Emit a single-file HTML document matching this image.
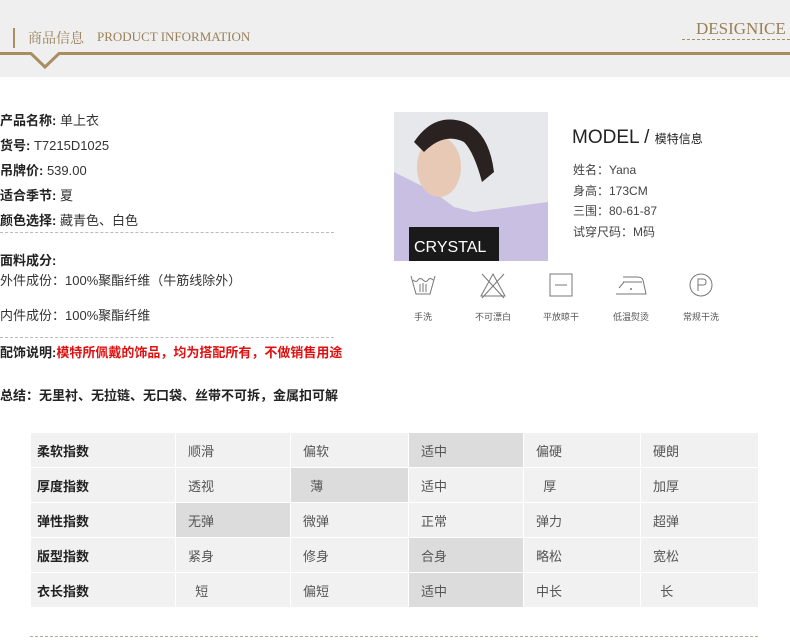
<!DOCTYPE html>
<html><head><meta charset="utf-8"><style>
*{margin:0;padding:0;box-sizing:border-box}
body{width:790px;height:642px;background:#fff;position:relative;overflow:hidden;font-family:"Liberation Sans","Noto Sans CJK SC",sans-serif;color:#333}
.a{position:absolute;white-space:nowrap}
.t{font-size:13px}
b{font-weight:bold;color:#222}
.dash{position:absolute;border-top:1px dashed #bbb;height:0}
table{position:absolute;left:30px;top:432px;border-collapse:collapse;font-size:13px}
td{height:35px;background:#f1f1f1;border:1px solid #fff;padding-left:12px;color:#555}
td.l{font-weight:bold;color:#222;padding-left:6px;width:145px}
td.s{background:#dcdcdc}
.ic{position:absolute;top:270px;width:50px;text-align:center;font-size:9px;color:#555}
</style></head><body>
<div class="a" style="left:0;top:0;width:790px;height:77px;background:#efefef"></div>
<div class="a" style="left:13px;top:28px;width:2px;height:20px;background:#a88e62"></div>
<div class="a" style="left:28px;top:28px;font-size:14px;color:#9a8058;font-family:'Liberation Serif','Noto Serif CJK SC',serif">商品信息<span style="font-size:13px;position:absolute;left:69px;top:1px">PRODUCT INFORMATION</span></div>
<div class="a" style="left:696px;top:19px;font-size:17px;color:#9a8058;font-family:'Liberation Serif',serif">DESIGNICE</div>
<div class="a" style="left:682px;top:39px;width:108px;border-top:1px dashed #a88e62"></div>
<svg class="a" style="left:0;top:50px" width="790" height="20"><path d="M0 3.5H31L45 17L59 3.5H790" stroke="#a88e62" stroke-width="3" fill="none"/></svg>

<div class="a t" style="left:0;top:110px"><b>产品名称:</b> 单上衣</div>
<div class="a t" style="left:0;top:135px"><b>货号:</b> T7215D1025</div>
<div class="a t" style="left:0;top:160px"><b>吊牌价:</b> 539.00</div>
<div class="a t" style="left:0;top:185px"><b>适合季节:</b> 夏</div>
<div class="a t" style="left:0;top:210px"><b>颜色选择:</b> 藏青色、白色</div>
<div class="dash" style="left:0;top:232px;width:334px"></div>
<div class="a t" style="left:0;top:250px"><b>面料成分:</b></div>
<div class="a t" style="left:0;top:270px">外件成份：100%聚酯纤维（牛筋线除外）</div>
<div class="a t" style="left:0;top:305px">内件成份：100%聚酯纤维</div>
<div class="dash" style="left:0;top:337px;width:334px"></div>
<div class="a t" style="left:0;top:342px"><b>配饰说明:</b><b style="color:#e01010">模特所佩戴的饰品，均为搭配所有，不做销售用途</b></div>
<div class="a t" style="left:0;top:385px"><b>总结：无里衬、无拉链、无口袋、丝带不可拆，金属扣可解</b></div>

<svg class="a" style="left:394px;top:112px" width="154" height="149">
<rect width="154" height="149" fill="#e6e8ec"/>
<path d="M0 60 L40 80 L60 95 L80 100 L154 90 V149 H0Z" fill="#c9bfe3"/>
<ellipse cx="45" cy="55" rx="22" ry="30" fill="#e8c9b5"/>
<path d="M20 30 Q40 0 70 10 Q95 20 100 60 L88 70 Q80 40 70 30 Q50 20 30 40Z" fill="#2a2220"/>
<rect x="15" y="115" width="90" height="34" fill="#1a1a1a"/>
<text x="20" y="140" font-size="16" fill="#fff" font-family="Liberation Sans">CRYSTAL</text>
</svg>
<div class="a" style="left:572px;top:127px;font-size:19px;color:#222">MODEL / <span style="font-size:12px">模特信息</span></div>
<div class="a" style="left:573px;top:160px;font-size:12px;color:#444;line-height:20.5px">姓名：Yana<br>身高：173CM<br>三围：80-61-87<br>试穿尺码：M码</div>

<div class="ic" style="left:398px"><svg width="30" height="30" viewBox="0 0 30 30"><path d="M3 6 L8 24 H22 L27 6 M5 10 Q8 13 10 10 Q12 7 15 10 Q18 13 20 10 Q22 7 25 10 M12 22 V14 M15 22 V13 M18 22 V14" stroke="#777" fill="none"/></svg><div style="margin-top:8px">手洗</div></div>
<div class="ic" style="left:468px"><svg width="30" height="30" viewBox="0 0 30 30"><path d="M15 4 L27 26 H3Z M4 4 L26 28 M26 4 L4 28" stroke="#777" fill="none"/></svg><div style="margin-top:8px">不可漂白</div></div>
<div class="ic" style="left:536px"><svg width="30" height="30" viewBox="0 0 30 30"><rect x="4" y="4" width="22" height="22" stroke="#777" fill="none"/><path d="M9 15H21" stroke="#777"/></svg><div style="margin-top:8px">平放晾干</div></div>
<div class="ic" style="left:606px"><svg width="36" height="30" viewBox="0 0 36 30"><path d="M3 24 H33 L30 10 Q29 7 24 7 H10 M10 12 H29 M6 18 L11 12" stroke="#777" fill="none"/><circle cx="18" cy="19" r="1" fill="#777"/></svg><div style="margin-top:8px">低温熨烫</div></div>
<div class="ic" style="left:676px"><svg width="30" height="30" viewBox="0 0 30 30"><circle cx="15" cy="15" r="11" stroke="#777" fill="none"/><path d="M12 21V9H17Q20 9 20 12Q20 15 17 15H12" stroke="#777" fill="none"/></svg><div style="margin-top:8px">常规干洗</div></div>

<table>
<tr><td class="l">柔软指数</td><td style="width:115px">顺滑</td><td style="width:118px">偏软</td><td class="s" style="width:115px">适中</td><td style="width:117px">偏硬</td><td style="width:118px">硬朗</td></tr>
<tr><td class="l">厚度指数</td><td>透视</td><td class="s">&nbsp;&nbsp;薄</td><td>适中</td><td>&nbsp;&nbsp;厚</td><td>加厚</td></tr>
<tr><td class="l">弹性指数</td><td class="s">无弹</td><td>微弹</td><td>正常</td><td>弹力</td><td>超弹</td></tr>
<tr><td class="l">版型指数</td><td>紧身</td><td>修身</td><td class="s">合身</td><td>略松</td><td>宽松</td></tr>
<tr><td class="l">衣长指数</td><td>&nbsp;&nbsp;短</td><td>偏短</td><td class="s">适中</td><td>中长</td><td>&nbsp;&nbsp;长</td></tr>
</table>
<div class="dash" style="left:30px;top:636px;width:728px;border-top-color:#b8a890"></div>
</body></html>
